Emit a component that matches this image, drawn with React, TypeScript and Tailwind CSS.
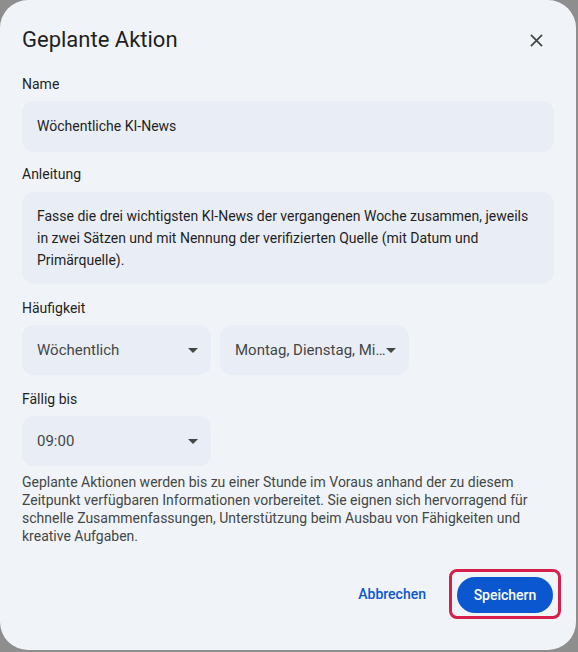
import React from "react";

// Dialog "Geplante Aktion" – scheduled action editor
const font = { fontFamily: "Roboto, 'Noto Sans', Arial, sans-serif" };

function Caret() {
  return (
    <svg width="10" height="5" viewBox="0 0 10 5" className="shrink-0">
      <path d="M0 0 L10 0 L5 5 Z" fill="#444746" />
    </svg>
  );
}

function Select({ value, className = "" }: { value: string; className?: string }) {
  return (
    <div
      className={`flex h-[50px] w-[189px] items-center justify-between rounded-xl bg-[#e9eef6] pl-[15px] pr-[13px] ${className}`}
    >
      <span className="truncate text-[15px] text-[#444746]">{value}</span>
      <Caret />
    </div>
  );
}

export default function App() {
  return (
    <div className="h-[652px] w-[578px] overflow-hidden bg-[#8e8e8e]" style={font}>
      <div className="flex h-[650px] w-[576px] flex-col rounded-[28px] bg-[#f0f4f9] px-[22px] text-[#1f1f1f]">
        {/* header */}
        <div className="flex items-center justify-between pt-[26px]">
          <h1 className="text-[22px] leading-7 text-[#1f1f1f]">Geplante Aktion</h1>
          <button className="mr-[6px] flex h-6 w-6 items-center justify-center">
            <svg width="13" height="13" viewBox="0 0 14 14">
              <path d="M1 1 L13 13 M13 1 L1 13" stroke="#444746" strokeWidth="1.9" />
            </svg>
          </button>
        </div>

        <label className="mt-[20px] text-sm leading-5">Name</label>
        <div className="mt-[7px] flex h-[51px] items-center rounded-xl bg-[#e9eef6] px-[15px] text-[14px]">
          Wöchentliche KI-News
        </div>

        <label className="mt-[12px] text-sm leading-5">Anleitung</label>
        <div className="mt-[8px] rounded-xl bg-[#e9eef6] py-[13px] pl-[15px] pr-[16px] text-[14px] leading-[22px]">
          Fasse die drei wichtigsten KI-News der vergangenen Woche zusammen, jeweils in zwei Sätzen und mit
          Nennung der verifizierten Quelle (mit Datum und Primärquelle).
        </div>

        <label className="mt-[14px] text-sm leading-5">Häufigkeit</label>
        <div className="mt-[7px] flex gap-[9px]">
          <Select value="Wöchentlich" />
          <Select value="Montag, Dienstag, Mi..." className="pr-[12px]" />
        </div>

        <label className="mt-[14px] text-sm leading-5">Fällig bis</label>
        <div className="mt-[7px] flex">
          <Select value="09:00" />
        </div>

        <p className="mt-[7px] text-[14px] leading-[18px] text-[#444746]">
          Geplante Aktionen werden bis zu einer Stunde im Voraus anhand der zu diesem Zeitpunkt verfügbaren
          Informationen vorbereitet. Sie eignen sich hervorragend für schnelle Zusammenfassungen, Unterstützung
          beim Ausbau von Fähigkeiten und kreative Aufgaben.
        </p>

        <div className="mt-auto mb-[31px] flex items-center justify-end gap-[7px]">
          <button className="h-9 px-4 text-sm font-medium text-[#0b57d0]">Abbrechen</button>
          <div className="-mr-[7px] rounded-lg border-[3px] border-[#d61f4b] px-[5px] pt-[5px] pb-[3px]">
            <button className="h-9 w-[96px] rounded-full bg-[#0b57d0] text-sm font-medium text-white">
              Speichern
            </button>
          </div>
        </div>
      </div>
    </div>
  );
}
